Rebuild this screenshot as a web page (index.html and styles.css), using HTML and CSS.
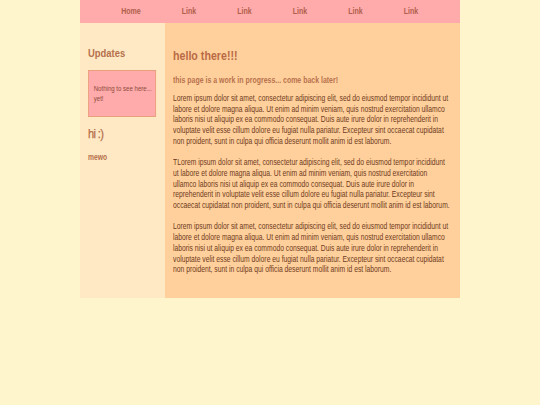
FILE: index.html
```html
<!DOCTYPE html>
<html>
<head>
<meta charset="utf-8">
<link rel="stylesheet" href="styles.css">
</head>
<body>
<div class="page">
  <nav class="nav">
    <div class="nav-inner narrow">
      <a class="nav-item">Home</a>
      <a class="nav-item">Link</a>
      <a class="nav-item">Link</a>
      <a class="nav-item">Link</a>
      <a class="nav-item">Link</a>
      <a class="nav-item">Link</a>
    </div>
  </nav>
  <div class="body">
    <aside class="side">
      <div class="side-inner narrow">
        <h2 class="side-title">Updates</h2>
        <div class="update-box">Nothing to see here... yet!</div>
        <h2 class="side-hi">hi :)</h2>
        <p class="side-mewo">mewo</p>
      </div>
    </aside>
    <main class="main">
      <div class="main-inner narrow">
        <h1 class="title">hello there!!!</h1>
        <h3 class="subtitle">this page is a work in progress... come back later!</h3>
        <p class="para">Lorem ipsum dolor sit amet, consectetur adipiscing elit, sed do eiusmod tempor incididunt ut labore et dolore magna aliqua. Ut enim ad minim veniam, quis nostrud exercitation ullamco laboris nisi ut aliquip ex ea commodo consequat. Duis aute irure dolor in reprehenderit in voluptate velit esse cillum dolore eu fugiat nulla pariatur. Excepteur sint occaecat cupidatat non proident, sunt in culpa qui officia deserunt mollit anim id est laborum.</p>
        <p class="para">TLorem ipsum dolor sit amet, consectetur adipiscing elit, sed do eiusmod tempor incididunt ut labore et dolore magna aliqua. Ut enim ad minim veniam, quis nostrud exercitation ullamco laboris nisi ut aliquip ex ea commodo consequat. Duis aute irure dolor in reprehenderit in voluptate velit esse cillum dolore eu fugiat nulla pariatur. Excepteur sint occaecat cupidatat non proident, sunt in culpa qui officia deserunt mollit anim id est laborum.</p>
        <p class="para">Lorem ipsum dolor sit amet, consectetur adipiscing elit, sed do eiusmod tempor incididunt ut labore et dolore magna aliqua. Ut enim ad minim veniam, quis nostrud exercitation ullamco laboris nisi ut aliquip ex ea commodo consequat. Duis aute irure dolor in reprehenderit in voluptate velit esse cillum dolore eu fugiat nulla pariatur. Excepteur sint occaecat cupidatat non proident, sunt in culpa qui officia deserunt mollit anim id est laborum.</p>
      </div>
    </main>
  </div>
</div>
</body>
</html>
```
FILE: styles.css
```css
html, body {
  margin: 0;
  padding: 0;
  background: #fff5cd;
  font-family: "Liberation Sans", Arial, sans-serif;
}
.page {
  width: 380px;
  margin: 0 auto;
}
/* emulate a narrow (condensed) sans face */
.narrow {
  transform: scaleX(0.82);
  transform-origin: 0 0;
}
.nav {
  height: 23px;
  background: #ffabab;
  overflow: hidden;
}
.nav-inner {
  display: flex;
  height: 22px;
  align-items: center;
  width: 463px;
  padding-left: 25.2px;
  box-sizing: border-box;
}
.nav-item {
  padding: 0 25px;
  font-size: 8.6px;
  font-weight: bold;
  color: #b0604c;
}
.body {
  display: flex;
  min-height: 275px;
}
.side {
  width: 77px;
  background: #ffe9c4;
  padding: 0 0 0 8px;
  overflow: hidden;
}
.side-inner {
  width: 94px;
}
.side-title {
  margin: 23px 0 0;
  font-size: 11.5px;
  line-height: 14px;
  color: #b5704c;
}
.update-box {
  margin-top: 10px;
  width: 75px;
  height: 29px;
  padding: 8px 0 8px 6px;
  background: #ffabab;
  border: 1px solid #e8a07a;
  border-width: 1px 1.2px;
  font-size: 7.4px;
  line-height: 9.5px;
  color: #8a4a3a;
  display: flex;
  align-items: center;
}
.side-hi {
  margin: 9px 0 0;
  font-size: 13.5px;
  letter-spacing: -0.8px;
  line-height: 16px;
  color: #b36c48;
  font-weight: normal;
  -webkit-text-stroke: 0.25px #b36c48;
}
.side-mewo {
  margin: 11px 0 0;
  font-size: 8.2px;
  font-weight: bold;
  color: #b5704c;
}
.main {
  flex: 1;
  background: #ffd09c;
  padding: 0 8px 20px 8px;
  overflow: hidden;
}
.main-inner {
  width: 338px;
}
.title {
  margin: 24px 0 0;
  font-size: 13px;
  line-height: 18px;
  color: #b96a45;
}
.subtitle {
  margin: 8.5px 0 0;
  font-size: 8.5px;
  line-height: 12px;
  color: #b8724e;
}
.para {
  margin: 8.5px 0 0;
  font-size: 8.25px;
  line-height: 10.7px;
  color: #6e3a20;
}
.para + .para {
  margin-top: 10.7px;
}
```
